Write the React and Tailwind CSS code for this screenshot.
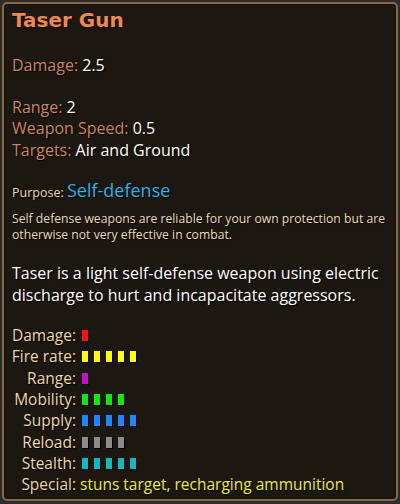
const stats = [
  { label: 'Damage:', count: 1, color: 'bg-[#ff1010]' },
  { label: 'Fire rate:', count: 5, color: 'bg-[#ffff00]' },
  { label: 'Range:', count: 1, color: 'bg-[#c010c8]' },
  { label: 'Mobility:', count: 4, color: 'bg-[#10e810]' },
  { label: 'Supply:', count: 5, color: 'bg-[#1a88ff]' },
  { label: 'Reload:', count: 4, color: 'bg-[#8c8c8c]' },
  { label: 'Stealth:', count: 5, color: 'bg-[#10b8c0]' },
]

const shadow = '[text-shadow:1px_1px_1px_#000]'

function StatLabel({ children }) {
  return (
    <span className={`w-[68px] shrink-0 flex justify-end whitespace-nowrap pr-[4px] text-[15.5px] text-[#ecd9a8] ${shadow}`}>
      {children}
    </span>
  )
}

function StatRow({ label, count, color }) {
  return (
    <div className="flex items-center h-[21.3px]">
      <StatLabel>{label}</StatLabel>
      <div className="flex gap-[6px] pl-[2px]">
        {Array.from({ length: count }).map((_, i) => (
          <div key={i} className={`w-[6px] h-[11px] ${color} shadow-[1px_1px_0_#000]`} />
        ))}
      </div>
    </div>
  )
}

export default function App() {
  return (
    <div className="w-[400px] h-[504px] bg-[#2b2d2c] p-[2px]" style={{ fontFamily: '"Open Sans", "Liberation Sans", sans-serif' }}>
      <div className="w-[396px] h-[499px] rounded-[5px] border-2 border-[#8a6844] bg-[#1d1711] px-[8px] pt-[3px]">
        {/* Title */}
        <div
          className={`text-[20px] font-bold text-[#ee8a4e] leading-[26px] ${shadow}`}
          style={{ fontFamily: '"DejaVu Sans", sans-serif' }}
        >
          Taser Gun
        </div>

        {/* Main stats */}
        <div className={`mt-[22px] text-[16px] leading-[21.5px] ${shadow}`}>
          <div><span className="text-[#c9875a]">Damage:</span> <span className="text-white">2.5</span></div>
          <div className="h-[20px]" />
          <div><span className="text-[#c9875a]">Range:</span> <span className="text-white">2</span></div>
          <div><span className="text-[#c9875a]">Weapon Speed:</span> <span className="text-white">0.5</span></div>
          <div><span className="text-[#c9875a]">Targets:</span> <span className="text-white">Air and Ground</span></div>
        </div>

        {/* Purpose */}
        <div className={`mt-[17px] leading-[24px] ${shadow}`}>
          <span className="text-[12.5px] text-[#ecdcb0]">Purpose: </span>
          <span className="text-[18px] text-[#27b4e8]">Self-defense</span>
        </div>
        <div className={`mt-[6px] text-[12.2px] leading-[16px] text-[#ecdcb0] ${shadow}`}>
          Self defense weapons are reliable for your own protection but are otherwise not very effective in combat.
        </div>

        {/* Description */}
        <div className={`mt-[19px] text-[16px] leading-[22px] text-white ${shadow}`}>
          Taser is a light self-defense weapon using electric discharge to hurt and incapacitate aggressors.
        </div>

        {/* Bars */}
        <div className="mt-[19px] flex flex-col">
          {stats.map((s) => (
            <StatRow key={s.label} {...s} />
          ))}
          <div className="flex items-center h-[21.3px]">
            <StatLabel>Special:</StatLabel>
            <span className={`whitespace-nowrap text-[15.5px] text-[#f0f020] ${shadow}`}>stuns target, recharging ammunition</span>
          </div>
        </div>
      </div>
    </div>
  )
}
